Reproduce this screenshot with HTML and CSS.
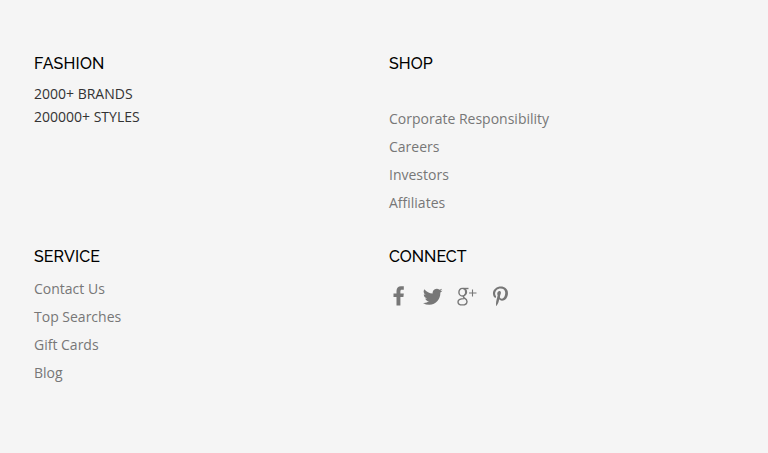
FILE: index.html
```
<!DOCTYPE html>
<html lang="en">
<head>
  <meta charset="UTF-8">
  <meta name="viewport" content="width=device-width, initial-scale=1.0">
  <title>Fashion</title>
  <link rel="stylesheet" href="styles.css">
</head>
<body>

  <footer class="footer">
    <div class="col fashion">
      <h4>FASHION</h4>
      <p>2000+ BRANDS</p>
      <p>200000+ STYLES</p>
    </div>

    <div class="col shop">
      <h4>SHOP</h4>
      <ul>
        <li><a href="#">Corporate Responsibility</a></li>
        <li><a href="#">Careers</a></li>
        <li><a href="#">Investors</a></li>
        <li><a href="#">Affiliates</a></li>
      </ul>
    </div>

    <div class="col service">
      <h4>SERVICE</h4>
      <ul>
        <li><a href="#">Contact Us</a></li>
        <li><a href="#">Top Searches</a></li>
        <li><a href="#">Gift Cards</a></li>
        <li><a href="#">Blog</a></li>
      </ul>
    </div>

    <div class="col connect">
      <h4>CONNECT</h4>
      <!-- Social icons -->
      <div class="social">
        <a href="#" aria-label="Facebook">
          <svg viewBox="0 0 20 20"><path d="M7.500 19.500V11H4.500V7.600h3V5C7.500 2 9.200.300 11.900.300h2.900v3.500h-1.900c-1.100 0-1.500.6-1.500 1.600v2.200h3.400l-.4 3.400h-3v8.500z"/></svg>
        </a>
        <a href="#" aria-label="Twitter">
          <svg viewBox="0 -.8 24 24"><path d="M23.300 4.570a10 10 0 0 1-2.500.775 4.958 4.958 0 0 0 2-2.723 10 10 0 0 1-3 1.184 4.920 4.920 0 0 0-8.200 4.482C7.690 8.095 4.067 6.130 1.640 3.162a4.920 4.920 0 0 0 1.523 6.574 4.900 4.900 0 0 1-2.229-.616v.060a4.923 4.923 0 0 0 3.946 4.827 5 5 0 0 1-2.212.085 4.936 4.936 0 0 0 4.604 3.417A9.867 9.867 0 0 1 0 19.540a14 14 0 0 0 7.548 2.212c8.600 0 13.500-7.721 13.300-14.646a10 10 0 0 0 2.452-2.536z"/></svg>
        </a>
        <a href="#" aria-label="Google Plus">
          <svg class="line" viewBox="0 0 20 20">
            <path d="M11.500 2.500H6"/>
            <ellipse cx="5.300" cy="6.200" rx="3.400" ry="3.800"/>
            <path d="M8 2.700c2.200 2.300 1.900 4.900-.3 6.500-1.700 1.200-1.600 2-.2 2.900 1.900 1.200 2.500 2 2.500 3.300 0 2.100-2 3.500-4.700 3.500-2.600 0-4.300-1.100-4.300-3 0-2.100 2.300-3.300 6.200-3.300"/>
            <path class="plus" d="M15.500 3.500v7M12 7h7.500"/>
          </svg>
        </a>
        <a href="#" aria-label="Pinterest">
          <svg viewBox="-50 -8 512 512"><path d="M204 6.500C101.400 6.500 0 74.900 0 185.600 0 256 39.600 296 63.600 296c9.900 0 15.600-27.600 15.600-35.400 0-9.300-23.700-29.100-23.700-67.800 0-80.400 61.200-137.400 140.400-137.400 68.100 0 118.500 38.700 118.500 109.800 0 53.100-21.300 152.700-90.300 152.700-24.900 0-46.200-18-46.200-43.800 0-37.800 26.400-74.400 26.400-113.400 0-66.200-93.900-54.200-93.900 25.800 0 16.800 2.100 35.400 9.600 50.700-13.800 59.400-42 147.900-42 209.100 0 18.900 2.700 37.500 4.500 56.400 3.400 3.800 1.700 3.400 6.900 1.500 50.400-69 48.600-82.500 71.400-172.800 12.300 23.400 44.100 36 69.300 36 106.200 0 153.900-103.500 153.900-196.800C384 71.300 298.200 6.500 204 6.500z"/></svg>
        </a>
      </div>
    </div>
  </footer>

</body>
</html>
```
FILE: styles.css
```
body {
  margin: 0;
  background-color: #f5f5f5;
  font-family: 'Open Sans', sans-serif;
  font-size: 14px;
  color: #333;
}

.footer {
  display: grid;
  grid-template-columns: 355px 355px;
  grid-template-rows: 193px auto;
  padding: 54px 24px 0 34px;
}

h4 {
  margin: 0;
  font-family: Raleway, Lato, sans-serif;
  font-size: 16px;
  font-weight: 500;
  line-height: 20px;
  color: #000;
}

.fashion h4 {
  margin-bottom: 8px;
  letter-spacing: 0.2px;
}

.shop h4,
.service h4 {
  letter-spacing: 0.1px;
}

p {
  margin: 0;
  line-height: 23px;
}

ul {
  list-style: none;
  margin: 0;
  padding: 0;
}

li {
  line-height: 28px;
}

.shop ul {
  margin-top: 31px;
}

.service ul {
  margin-top: 8px;
}

a {
  color: #777;
  text-decoration: none;
}

.social {
  display: flex;
  gap: 14px;
  margin-top: 19px;
}

.social a,
.social svg {
  display: block;
  width: 20px;
  height: 20px;
}

.social svg {
  fill: #777;
}

.social .line {
  fill: none;
  stroke: #777;
  stroke-width: 1.4;
}

.social .plus {
  stroke-width: 1.1;
}
```
